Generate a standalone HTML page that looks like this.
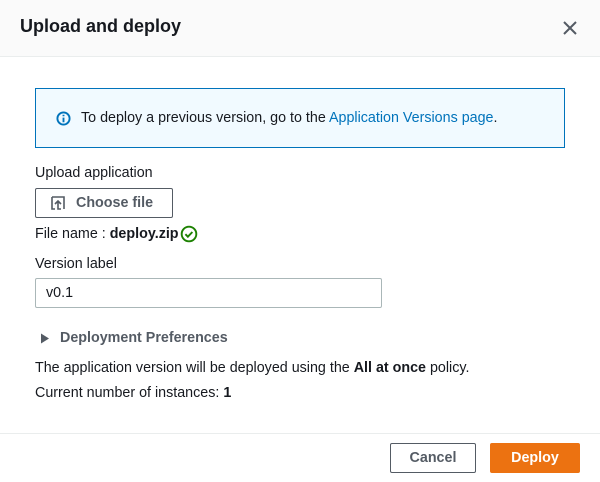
<!DOCTYPE html>
<html><head><style>
*{margin:0;padding:0;box-sizing:border-box}
body{width:600px;height:482px;background:#fff;font-family:"Liberation Sans",sans-serif;color:#16191f;font-size:14.3px;position:relative;overflow:hidden}
.a{position:absolute;white-space:nowrap}
</style></head><body>
<div class="a" style="left:0;top:0;width:600px;height:57px;background:#fafafa;border-bottom:1px solid #eaeded"></div>
<div class="a" style="left:20px;top:16px;font-size:18px;font-weight:bold">Upload and deploy</div>
<svg class="a" style="left:562px;top:20px" width="16" height="16" viewBox="0 0 16 16"><path d="M2 2L14 14M14 2L2 14" stroke="#545b64" stroke-width="2"/></svg>
<div class="a" style="left:35px;top:88px;width:530px;height:60px;background:#f1faff;border:1px solid #0073bb"></div>
<svg class="a" style="left:56px;top:111px" width="15" height="15" viewBox="0 0 16 16"><circle cx="8" cy="8" r="6.5" fill="none" stroke="#0073bb" stroke-width="2"/><path d="M8 7v5M8 4v1.6" stroke="#0073bb" stroke-width="2"/></svg>
<div class="a" style="left:81px;top:110px">To deploy a previous version, go to the <span style="color:#0073bb">Application Versions page</span>.</div>
<div class="a" style="left:35px;top:165px">Upload application</div>
<div class="a" style="left:35px;top:188px;width:138px;height:30px;border:1px solid #545b64;border-radius:2px"></div>
<svg class="a" style="left:51px;top:196px" width="14" height="14" viewBox="0 0 14 14"><path d="M1 1h12v12M1 1v12h3M10 13H7V5M4 8l3-3 3 3" fill="none" stroke="#545b64" stroke-width="1.6"/></svg>
<div class="a" style="left:76px;top:195px;font-weight:bold;color:#545b64">Choose file</div>
<div class="a" style="left:35px;top:226px">File name : <b>deploy.zip</b></div>
<svg class="a" style="left:180px;top:225px" width="18" height="18" viewBox="0 0 16 16"><circle cx="8" cy="8" r="6.5" fill="none" stroke="#1d8102" stroke-width="1.7"/><path d="M4.8 8.2l2.2 2.2 4-4.2" fill="none" stroke="#1d8102" stroke-width="1.7"/></svg>
<div class="a" style="left:35px;top:256px">Version label</div>
<div class="a" style="left:35px;top:278px;width:347px;height:30px;border:1px solid #aab7b8;border-radius:2px"></div>
<div class="a" style="left:46px;top:285px">v0.1</div>
<svg class="a" style="left:40px;top:333px" width="10" height="11" viewBox="0 0 10 11"><path d="M1 0.5L9 5.5L1 10.5Z" fill="#545b64"/></svg>
<div class="a" style="left:60px;top:330px;font-weight:bold;color:#545b64">Deployment Preferences</div>
<div class="a" style="left:35px;top:360px">The application version will be deployed using the <b>All at once</b> policy.</div>
<div class="a" style="left:35px;top:385px">Current number of instances: <b>1</b></div>
<div class="a" style="left:0;top:433px;width:600px;height:1px;background:#eaeded"></div>
<div class="a" style="left:390px;top:443px;width:86px;height:30px;border:1px solid #545b64;border-radius:2px;text-align:center;line-height:28px;font-weight:bold;color:#545b64">Cancel</div>
<div class="a" style="left:490px;top:443px;width:90px;height:30px;background:#ec7211;border-radius:2px;text-align:center;line-height:30px;font-weight:bold;color:#fff">Deploy</div>
</body></html>
